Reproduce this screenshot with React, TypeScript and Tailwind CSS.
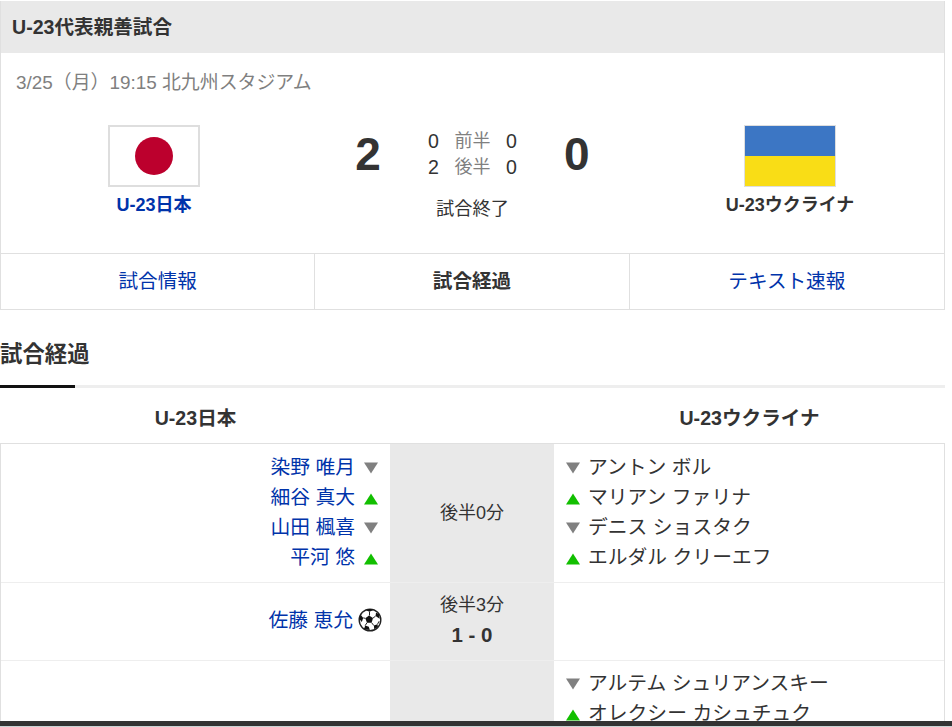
const F = '[font-family:"Liberation_Sans","Noto_Sans_CJK_JP",sans-serif]';

function Down() {
  return (
    <svg width="14" height="12" viewBox="0 0 14 12" className="shrink-0">
      <path d="M0 0.500H14L7 11.500Z" fill="#808080" />
    </svg>
  );
}
function Up() {
  return (
    <svg width="14" height="12" viewBox="0 0 14 12" className="shrink-0">
      <path d="M0 11.500H14L7 0.500Z" fill="#12bf00" />
    </svg>
  );
}
function Ball() {
  return (
    <svg width="24" height="24" viewBox="0 0 24 24" className="shrink-0">
      <circle cx="12" cy="12" r="10.8" fill="#fff" stroke="#222" strokeWidth="1.4" />
      <path d="M11 7.500l4 2.600-1.400 4.600H9l-1.700-4.400z" fill="#111" />
      <path d="M8 2.200l3.500 1.600 3.800-1.700-3.500-1zM18 4.500l-.4 3.600 4 2.700-.6-4.500zM2.600 6.500l2.600 3.400-1.400 4.100-2.400-3zM6 21l1.200-3.500 3.600 1.300 1 3.300zM16.200 21.300l-.3-3.700 3.600-1.300.4 2.700z" fill="#111" />
      <path d="M11.500 3.800v3.700M17.600 8.100l-2.600 2M5.200 9.900l2.100.4M7.200 17.500L9 14.700M15.900 17.600l-2.300-2.900M19.500 16.300l1.500-3" stroke="#222" strokeWidth="1" fill="none" />
    </svg>
  );
}

function Left({ name, mark }: { name: string; mark: 'up' | 'down' }) {
  return (
    <div className="flex h-[30px] items-center justify-end gap-[9px]">
      <a className="text-[19.800px] text-[#0033aa]">{name}</a>
      <span className={mark === 'up' ? 'translate-y-[2px]' : 'translate-y-[1px]'}>{mark === 'up' ? <Up /> : <Down />}</span>
    </div>
  );
}
function Right({ name, mark }: { name: string; mark: 'up' | 'down' }) {
  return (
    <div className="flex h-[30px] items-center gap-[8px]">
      <span className={mark === 'up' ? 'translate-y-[2px]' : 'translate-y-[1px]'}>{mark === 'up' ? <Up /> : <Down />}</span>
      <span className="text-[19.800px]">{name}</span>
    </div>
  );
}

export default function App() {
  return (
    <div className={`relative h-[727px] w-[952px] overflow-hidden bg-white text-[19.6px] leading-[30px] text-[#333] ${F}`}>
      <div className="w-[945px] pt-px">
        <section className="border border-t-0 border-[#e0e0e0]">
          <h2 className="flex h-[52px] items-center bg-[#e9e9e9] pl-[11px] text-[19.6px] font-bold text-[#333]">U-23代表親善試合</h2>
          <p className="pl-[15px] pt-[16px] text-[18.9px] leading-[28px] text-[#808080]">3/25（月）19:15 北九州スタジアム</p>
          <div className="flex h-[156px] pt-[28px]">
            <div className="flex w-[306px] flex-col items-center">
              <div className="flex h-[62px] w-[92px] items-center justify-center border-2 border-[#dedede] bg-white">
                <div className="h-[38px] w-[38px] rounded-full bg-[#bc002d]" />
              </div>
              <a className="mt-[5px] text-[18px] font-bold leading-[26px] text-[#0033aa]">U-23日本</a>
            </div>
            <div className="flex flex-1 flex-col items-center pl-[2px]">
              <div className="flex h-[62px] items-start">
                <span className="mt-[1px] w-[30px] text-center text-[46px] font-bold leading-[56px]">2</span>
                <div className="mx-[45px] pt-[3px] text-[#333]">
                  <div className="flex h-[26px] items-center gap-[15.500px]">
                    <span>0</span><span className="text-[18px] text-[#808080]">前半</span><span>0</span>
                  </div>
                  <div className="flex h-[26px] items-center gap-[15.500px]">
                    <span>2</span><span className="text-[18px] text-[#808080]">後半</span><span>0</span>
                  </div>
                </div>
                <span className="mt-[1px] w-[30px] text-center text-[46px] font-bold leading-[56px]">0</span>
              </div>
              <div className="mt-[7px] text-[18.200px] leading-[30px]">試合終了</div>
            </div>
            <div className="flex w-[308px] flex-col items-center">
              <div className="flex h-[62px] w-[92px] flex-col border border-[#dedede]">
                <div className="flex-1 bg-[#3c76c4]" />
                <div className="flex-1 bg-[#f9dd16]" />
              </div>
              <span className="mt-[5px] text-[18px] font-bold leading-[26px]">U-23ウクライナ</span>
            </div>
          </div>
          <nav className="grid h-[56px] grid-cols-3 border-t border-[#e0e0e0] pb-[1px] text-center">
            <a className="-mb-[1px] flex items-center justify-center border-r border-[#e0e0e0] pb-[1px] text-[#0033aa]">試合情報</a>
            <span className="-mb-[1px] flex items-center justify-center border-r border-[#e0e0e0] pb-[1px] font-bold">試合経過</span>
            <a className="-mb-[1px] flex items-center justify-center pb-[1px] text-[#0033aa]">テキスト速報</a>
          </nav>
        </section>

        <div className="mt-[29px] border-b-[3px] border-[#eeeeee]">
          <h3 className="-mb-[3px] h-[49px] w-[75px] whitespace-nowrap border-b-[3px] border-[#111] text-[22.400px] font-bold leading-[32px]">試合経過</h3>
        </div>

        <div className="flex h-[55px] items-center pt-[5px] text-[19.600px] font-bold">
          <div className="w-[391px] text-center">U-23日本</div>
          <div className="w-[163px]" />
          <div className="flex-1 text-center">U-23ウクライナ</div>
        </div>

        <div className="border-x border-t border-[#e0e0e0]">
          <div className="flex h-[139px] border-b border-[#eeeeee]">
            <div className="w-[389px] pr-[12px] pt-[8px]">
              <Left name="染野 唯月" mark="down" />
              <Left name="細谷 真大" mark="up" />
              <Left name="山田 楓喜" mark="down" />
              <Left name="平河 悠" mark="up" />
            </div>
            <div className="flex w-[164px] justify-center bg-[#e9e9e9] pt-[54px] text-[18px]">後半0分</div>
            <div className="flex-1 pl-[12px] pt-[8px]">
              <Right name="アントン ボル" mark="down" />
              <Right name="マリアン ファリナ" mark="up" />
              <Right name="デニス ショスタク" mark="down" />
              <Right name="エルダル クリーエフ" mark="up" />
            </div>
          </div>
          <div className="flex h-[78px] border-b border-[#eeeeee]">
            <div className="flex w-[389px] items-center justify-end gap-[5px] pb-[3px] pr-[8px]">
              <a className="text-[19.800px] text-[#0033aa]">佐藤 恵允</a>
              <Ball />
            </div>
            <div className="flex w-[164px] flex-col items-center bg-[#e9e9e9] pt-[7px] text-[18px]">
              <span>後半3分</span>
              <span className="text-[20.500px] font-bold">1 - 0</span>
            </div>
            <div className="flex-1" />
          </div>
          <div className="flex h-[81px]">
            <div className="w-[389px]" />
            <div className="w-[164px] bg-[#e9e9e9]" />
            <div className="flex-1 pl-[12px] pt-[7px]">
              <Right name="アルテム シュリアンスキー" mark="down" />
              <Right name="オレクシー カシュチュク" mark="up" />
            </div>
          </div>
        </div>
      </div>
      <div className="absolute inset-x-0 bottom-0 h-[6px] border-b border-[#c8d4d4] bg-[#333]" />
    </div>
  );
}
